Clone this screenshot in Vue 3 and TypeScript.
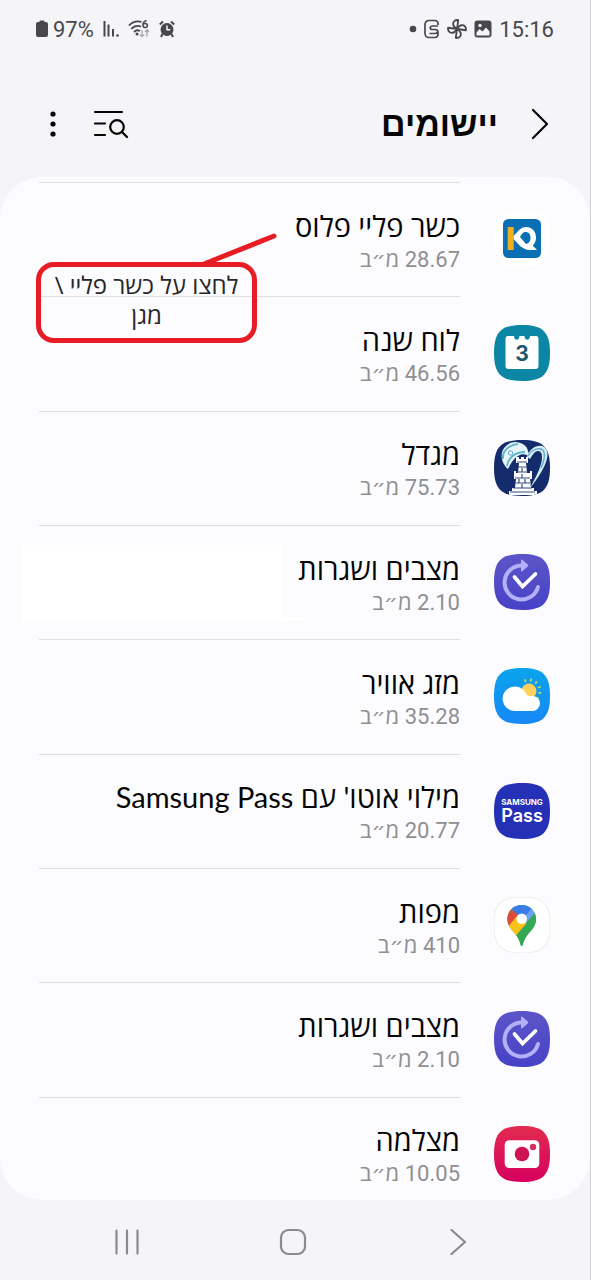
<script setup lang="ts">
interface AppEntry {
  name: string
  size: string
  icon: 'kosher' | 'calendar' | 'tower' | 'routines' | 'weather' | 'pass' | 'maps' | 'camera'
  patched?: boolean
}

const apps: AppEntry[] = [
  { name: 'כשר פליי פלוס', size: '28.67 מ״ב', icon: 'kosher' },
  { name: 'לוח שנה', size: '46.56 מ״ב', icon: 'calendar' },
  { name: 'מגדל', size: '75.73 מ״ב', icon: 'tower' },
  { name: 'מצבים ושגרות', size: '2.10 מ״ב', icon: 'routines', patched: true },
  { name: 'מזג אוויר', size: '35.28 מ״ב', icon: 'weather' },
  { name: "מילוי אוטו' עם Samsung Pass", size: '20.77 מ״ב', icon: 'pass' },
  { name: 'מפות', size: '410 מ״ב', icon: 'maps' },
  { name: 'מצבים ושגרות', size: '2.10 מ״ב', icon: 'routines' },
  { name: 'מצלמה', size: '10.05 מ״ב', icon: 'camera' },
]

const squircle = 'M28 0C49 0 56 7 56 28S49 56 28 56 0 49 0 28 7 0 28 0Z'
const sunRays = [-110, -80, -50, -20, 10, 40]
</script>

<template>
  <div class="page" dir="rtl">
    <div class="status" dir="ltr">
      <div class="status-group">
        <svg class="battery" width="12" height="18" viewBox="0 0 12 18"><path d="M3.5 1.5a1 1 0 0 1 1-1h3a1 1 0 0 1 1 1V2H10a2 2 0 0 1 2 2v11a2 2 0 0 1-2 2H2a2 2 0 0 1-2-2V4a2 2 0 0 1 2-2h1.500Z" fill="#48484a" /></svg>
        <span>97%</span>
        <svg class="signal" width="16" height="18" viewBox="0 0 16 18"><path d="M1.500 1v15.500M5.500 4.500v12M10 9v7.500" stroke="#48484a" stroke-width="2" fill="none" /><circle cx="14.500" cy="15.500" r="1.300" fill="#48484a" /></svg>
        <svg class="wifi" width="22" height="20" viewBox="0 0 22 20">
          <g fill="none" stroke="#48484a" stroke-width="1.800">
            <path d="M1 6.500C5 2.500 9 1.700 13.500 3M3.300 10C6 7 9 6 13 7.500M6 13C8 11 10 10.800 12 12" />
            <path d="M18.500 1.500C15.500 2.500 14.800 5 15 6.500a2.200 2 0 1 0 2.200-2c-1 0-1.900.5-2.200 1.200" stroke-width="1.500" />
          </g>
          <circle cx="9" cy="15" r="1.500" fill="#48484a" />
          <path d="M14 11v6.500m-2.200-2 2.200 2.200 2.200-2.200M19 17.500V11m-2 2 2-2.200 2 2.200" fill="none" stroke="#a6a6aa" stroke-width="1.300" />
        </svg>
        <svg class="alarm" width="16" height="18" viewBox="0 0 16 18">
          <circle cx="8" cy="9.500" r="6.500" fill="#48484a" />
          <path d="M.8 4.500 4 1.500M15.200 4.500 12 1.500M3.500 14 2 17M12.500 14l1.500 3" stroke="#48484a" stroke-width="2" />
          <path d="M8 5.500v4.300h3.300" fill="none" stroke="#f5f5f8" stroke-width="1.500" />
        </svg>
      </div>
      <div class="status-group notices">
        <svg class="dot" width="8" height="18" viewBox="0 0 8 18"><circle cx="4" cy="9" r="3.300" fill="#48484a" /></svg>
        <svg class="s-mark" width="16" height="20" viewBox="0 0 16 20"><path d="M14 6V4.500A3 3 0 0 0 11 1.500H5a4 4 0 0 0-4 4v9a4 4 0 0 0 4 4h6a3 3 0 0 0 3-3V13c0-2-1-2.500-3-2.500H8.500C5.500 10.500 5.500 7 8.500 7H14M5.500 14.500H11c1.500 0 2.500-.5 3-2" fill="none" stroke="#48484a" stroke-width="1.700" /></svg>
        <svg class="fan" width="20" height="20" viewBox="0 0 20 20">
          <g fill="none" stroke="#48484a" stroke-width="1.800" stroke-linejoin="round">
            <path v-for="angle in [0, 90, 180, 270]" :key="angle" d="M10 10V1C6.500 1 5 3.500 5.500 5.700 6 8 8 9.300 10 10Z" :transform="`rotate(${angle + 8} 10 10)`" />
          </g>
        </svg>
        <svg class="photo" width="18" height="18" viewBox="0 0 18 18"><rect x=".5" y=".5" width="17" height="17" rx="3" fill="#48484a" /><circle cx="6" cy="5.500" r="1.700" fill="#f5f5f8" /><path d="m2.500 12.500 3-3.500 3 2.500L12 7.500l3.500 4v4h-13Z" fill="#f5f5f8" /></svg>
        <span>15:16</span>
      </div>
    </div>

    <header class="header">
      <button class="icon-button back" type="button" aria-label="חזרה">
        <svg width="20" height="32" viewBox="0 0 20 32"><path d="M3 2 17 16 3 30" fill="none" stroke="#050506" stroke-width="2.200" stroke-linecap="round" stroke-linejoin="round" /></svg>
      </button>
      <h1>יישומים</h1>
      <button class="icon-button search" type="button" aria-label="חיפוש וסינון">
        <svg width="36" height="30" viewBox="0 0 36 30"><path d="M2 3h27M2 14.500h10M2 26h10" fill="none" stroke="#050506" stroke-width="2.200" stroke-linecap="round" /><circle cx="24" cy="18" r="6.800" fill="none" stroke="#050506" stroke-width="2.200" /><path d="m29 23 5 5" stroke="#050506" stroke-width="2.300" stroke-linecap="round" /></svg>
      </button>
      <button class="icon-button more" type="button" aria-label="אפשרויות נוספות">
        <svg width="8" height="28" viewBox="0 0 8 28"><g fill="#050506"><circle cx="4" cy="4" r="2.600" /><circle cx="4" cy="14" r="2.600" /><circle cx="4" cy="24" r="2.600" /></g></svg>
      </button>
    </header>

    <main class="card">
      <ul class="list">
        <li v-for="(app, index) in apps" :key="index" class="row">
          <svg class="app-icon" viewBox="0 0 56 56" aria-hidden="true">
            <defs>
              <linearGradient :id="`purple-${index}`" x1="0" y1="0" x2="0" y2="1"><stop offset="0" stop-color="#5c55c8" /><stop offset="1" stop-color="#4742c6" /></linearGradient>
              <linearGradient :id="`sky-${index}`" x1="0" y1="0" x2="0" y2="1"><stop offset="0" stop-color="#0ba3ec" /><stop offset="1" stop-color="#1688f7" /></linearGradient>
              <linearGradient :id="`red-${index}`" x1="0" y1="0" x2="0" y2="1"><stop offset="0" stop-color="#e22b50" /><stop offset="1" stop-color="#d6005f" /></linearGradient>
              <clipPath :id="`tile-${index}`"><path :d="squircle" /></clipPath>
              <clipPath :id="`pin-${index}`"><path d="M27.700 8c8.300 0 14.300 6.300 14.300 14 0 6-3.500 10-7 14-3 3.500-5 6.500-6 11-.4 2.500-2.200 2.500-2.600 0-1-4.500-3-7.500-6-11-3.500-4-7-8-7-14 0-7.700 6-14 14.300-14Z" /></clipPath>
            </defs>

            <template v-if="app.icon === 'kosher'">
              <path :d="squircle" fill="#fff" />
              <rect x="9" y="8" width="38" height="39" rx="5.500" fill="#0b70b3" />
              <path d="M13.700 16h6v23h-6Z" fill="#eeb01d" />
              <path fill-rule="evenodd" d="M19.700 25C23 21 27 16 32 16c6 0 10 4.500 10 10.500 0 3.500-1.200 6-3.300 8l4.300 4.500h-7.500C29 39 24 33 19.700 28ZM26 26l6 7c3-.5 4.500-3 4.500-6 0-4-2-6-5-6-2.500 0-4 2-5.500 5Z" fill="#fff" />
            </template>

            <template v-else-if="app.icon === 'calendar'">
              <path :d="squircle" fill="#0b87a5" />
              <path d="M14 11h6c0 5 5.500 5 5.500 0h5c0 5 5.500 5 5.500 0h6q2.500 0 2.500 3v27q0 3-3 3H14.500q-3 0-3-3V14q0-3 2.500-3Z" fill="#fff" />
              <text x="28" y="36" text-anchor="middle" class="day">3</text>
            </template>

            <template v-else-if="app.icon === 'tower'">
              <g :clip-path="`url(#tile-${index})`">
                <path d="M0 0h56v56H0Z" fill="#142c6b" />
                <path d="M14 29C7 23 5 12 12 6 18 0 28 1 33 8l3 9c-3-3-8-4-12-1-4 2-7 7-10 13Z" fill="#e5f5f9" />
                <path d="M9 19C8 11 15 5 24 4M13 26c1-8 8-14 18-14" fill="none" stroke="#67b3ca" stroke-width="2" />
                <circle cx="16.500" cy="13" r="2.200" fill="none" stroke="#67a8c8" />
                <path d="M33 17c2-7 8-12 15-11 7 2 7 11 2 21-4 8-9 15-14 21 4-8 9-16 11-24 2-8 1-13-3-13-3 0-5 3-8 8Z" fill="#d3edf5" />
                <path d="M34 16c2-5 8-8 13-7 5 2 4 10 0 19" fill="none" stroke="#65acc5" stroke-width="1.400" />
                <path d="M22 17h3v2h2v-2h3v2h2v-2h2v6h-2l1 10h3v-2h2v8h-2l1 9h3v3h3v4H15v-4h3v-3h3l1-9h-2v-8h2v2h2l1-10h-3Z" fill="#fff" />
                <path d="M23 22h10M24 27h8M23 32h11M21 38h15M22 43h14M19 48h19M16 52h25M28 28v4M28 34v4M25 39v4M31 39v4M28 44v4" stroke="#384b7f" stroke-width="1.200" />
              </g>
            </template>

            <template v-else-if="app.icon === 'routines'">
              <path :d="squircle" :fill="`url(#purple-${index})`" />
              <path d="M28 11.500a17 17 0 1 0 16 21.500" fill="none" stroke="#b4b0f8" stroke-width="4" stroke-linecap="round" />
              <path d="M27 6.500q0-1.500 1.300-.7l5.400 4.700q1 1 0 2l-5.400 4.700Q27 18 27 16.500Z" fill="#b4b0f8" />
              <path d="m20.500 23 8 9.500L41.500 20" fill="none" stroke="#fff" stroke-width="3.700" stroke-linecap="round" stroke-linejoin="miter" />
            </template>

            <template v-else-if="app.icon === 'weather'">
              <path :d="squircle" :fill="`url(#sky-${index})`" />
              <path v-for="ray in sunRays" :key="ray" d="M9.500 0h3" :transform="`translate(35 23) rotate(${ray})`" stroke="#b5d86a" stroke-width="1.800" />
              <circle cx="35" cy="23" r="7.500" fill="#ffd15b" />
              <path d="M21 43a12.300 12.300 0 1 1 11-17.500q1.200 2.500 3.500 2.500h3a7.500 7.500 0 0 1 0 15Z" fill="#fff" />
            </template>

            <template v-else-if="app.icon === 'pass'">
              <path :d="squircle" fill="#2430b5" />
              <text x="28" y="22" text-anchor="middle" class="brand">SAMSUNG</text>
              <text x="28" y="39" text-anchor="middle" class="brand-name">Pass</text>
            </template>

            <template v-else-if="app.icon === 'maps'">
              <path :d="squircle" fill="#fff" stroke="#ececef" />
              <g :clip-path="`url(#pin-${index})`">
                <path d="M0 0h56v56H0Z" fill="#34a853" />
                <path d="M10 5h35L28 22Z" fill="#3b7de8" />
                <path d="m31 19 10-11 2 6-12 13Z" fill="#6aa2ef" />
                <path d="M10 7 18 13l7 6-12 14-6-8Z" fill="#df4a3b" />
                <path d="M12 32 23 19l10 7-14 17Z" fill="#fbc118" />
                <path d="M43 14 19 42l8 9h20Z" fill="#34a853" />
              </g>
              <circle cx="27.700" cy="21.700" r="5.300" fill="#fff" />
            </template>

            <template v-else>
              <path :d="squircle" :fill="`url(#red-${index})`" />
              <rect x="10.700" y="14.300" width="34.600" height="27.700" rx="4.500" fill="#fff" />
              <circle cx="28" cy="28" r="7.300" fill="#cf1454" />
              <circle cx="39" cy="21" r="3.200" fill="#d3305c" />
            </template>
          </svg>
          <div class="details">
            <span class="name">{{ app.name }}</span>
            <span class="size">{{ app.size }}</span>
          </div>
          <span v-if="app.patched" class="patch"></span>
        </li>
      </ul>

      <aside class="callout">
        <svg class="pointer" width="76" height="34" viewBox="0 0 76 34" aria-hidden="true"><path d="M3 31 73 3" stroke="#e81c25" stroke-width="5" stroke-linecap="round" /></svg>
        <p>לחצו על כשר פליי \<br />מגן</p>
      </aside>
    </main>

    <nav class="nav" dir="ltr">
      <button class="icon-button" type="button" aria-label="אפליקציות אחרונות">
        <svg width="28" height="28" viewBox="0 0 28 28"><path d="M3.500 2.500v23M14 2.500v23M24.500 2.500v23" stroke="#8b8b8e" stroke-width="2.200" stroke-linecap="round" /></svg>
      </button>
      <button class="icon-button" type="button" aria-label="בית">
        <svg width="28" height="28" viewBox="0 0 28 28"><rect x="2" y="2" width="24" height="24" rx="7.500" fill="none" stroke="#8b8b8e" stroke-width="2.200" /></svg>
      </button>
      <button class="icon-button" type="button" aria-label="אחורה">
        <svg width="28" height="28" viewBox="0 0 28 28"><path d="M7.500 2 21 14 7.500 26" fill="none" stroke="#8b8b8e" stroke-width="2.200" stroke-linecap="round" stroke-linejoin="round" /></svg>
      </button>
    </nav>
  </div>
</template>

<style>
body {
  background: #f5f5f8;
}
</style>

<style scoped>
.page {
  box-sizing: border-box;
  display: flex;
  flex-direction: column;
  min-height: 100vh;
  border-right: 1px solid #cfcfd2;
  background: #f5f5f8;
  color: #050506;
  font-family: Roboto, "Open Sans", "DejaVu Sans", sans-serif;
}

.status {
  display: flex;
  align-items: center;
  justify-content: space-between;
  height: 58px;
  padding: 0 36px;
  color: #48484a;
  font-size: 22px;
}

.status-group {
  display: flex;
  align-items: center;
  gap: 9px;
}

.notices {
  gap: 7px;
}

.battery {
  margin-right: -4px;
}

.header {
  display: flex;
  align-items: center;
  box-sizing: border-box;
  height: 119px;
  padding: 12px 40px 0 49px;
}

h1 {
  flex: 1;
  margin: 0 32px 0 0;
  font-family: "Liberation Sans", sans-serif;
  font-size: 34px;
  font-weight: 700;
  line-height: 48px;
}

.icon-button {
  display: flex;
  align-items: center;
  justify-content: center;
  padding: 0;
  border: 0;
  background: none;
}

.search {
  margin-left: 36px;
}

.card {
  position: relative;
  display: flex;
  flex: 1;
  flex-direction: column;
  padding-top: 5px;
  overflow: hidden;
  border-radius: 42px;
  background: #fcfcff;
}

.list {
  display: grid;
  flex: 1;
  grid-auto-rows: minmax(114px, 1fr);
  margin: 0 0 -11px;
  padding: 0;
  list-style: none;
}

.row {
  position: relative;
  display: flex;
  align-items: stretch;
  gap: 34px;
  padding: 0 40px 0 39px;
}

.app-icon {
  flex: none;
  align-self: center;
  width: 56px;
  height: 56px;
}

.details {
  display: flex;
  flex: 1;
  flex-direction: column;
  justify-content: center;
  padding-top: 4px;
  border-top: 1px solid #dfdfe2;
}

.name {
  font-family: Lato, "Open Sans", sans-serif;
  font-size: 29px;
  line-height: 36px;
}

.size {
  color: #8f8f92;
  font-size: 22px;
  line-height: 32px;
}

.patch {
  position: absolute;
  top: 20px;
  left: 22px;
  width: 44%;
  height: 76px;
  background: #fff;
}

.patch::after {
  position: absolute;
  bottom: 0;
  left: 100%;
  width: 22px;
  height: 4px;
  background: #fff;
  content: "";
}

.day {
  fill: #1d596b;
  font: 700 21px Inter, sans-serif;
}

.brand {
  fill: #fff;
  font: 700 8px Inter, sans-serif;
}

.brand-name {
  fill: #fff;
  font: 600 18px Inter, sans-serif;
}

.callout {
  position: absolute;
  top: 85px;
  left: 36px;
  box-sizing: border-box;
  width: 221px;
  padding: 3px 0 8px;
  border: 5px solid #e81c25;
  border-radius: 18px;
  color: #262628;
  font-family: "Open Sans", sans-serif;
  font-size: 24px;
  line-height: 30px;
  text-align: center;
}

.callout p {
  margin: 0;
}

.pointer {
  position: absolute;
  top: -34px;
  left: 160px;
}

.nav {
  display: flex;
  align-items: center;
  justify-content: space-between;
  box-sizing: border-box;
  height: 80px;
  padding: 4px 118px 0 113px;
}
</style>
